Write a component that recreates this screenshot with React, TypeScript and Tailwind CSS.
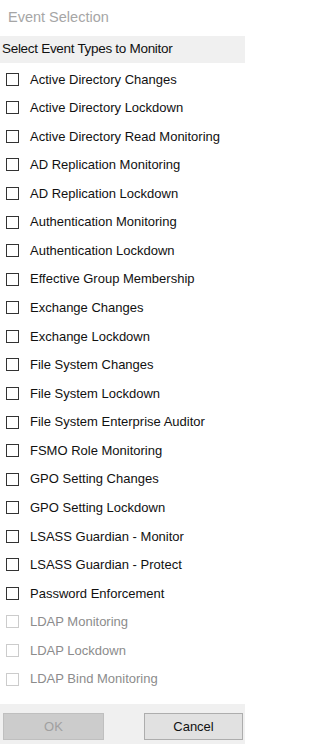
import React from "react"

const events: { label: string; disabled?: boolean }[] = [
  { label: "Active Directory Changes" },
  { label: "Active Directory Lockdown" },
  { label: "Active Directory Read Monitoring" },
  { label: "AD Replication Monitoring" },
  { label: "AD Replication Lockdown" },
  { label: "Authentication Monitoring" },
  { label: "Authentication Lockdown" },
  { label: "Effective Group Membership" },
  { label: "Exchange Changes" },
  { label: "Exchange Lockdown" },
  { label: "File System Changes" },
  { label: "File System Lockdown" },
  { label: "File System Enterprise Auditor" },
  { label: "FSMO Role Monitoring" },
  { label: "GPO Setting Changes" },
  { label: "GPO Setting Lockdown" },
  { label: "LSASS Guardian - Monitor" },
  { label: "LSASS Guardian - Protect" },
  { label: "Password Enforcement" },
  { label: "LDAP Monitoring", disabled: true },
  { label: "LDAP Lockdown", disabled: true },
  { label: "LDAP Bind Monitoring", disabled: true },
]

export default function App() {
  return (
    <div
      className="flex flex-col w-[245px] h-[744px] bg-white overflow-hidden"
      style={{ fontFamily: '"Liberation Sans", Arial, sans-serif' }}
    >
      {/* Title */}
      <div className="h-[36px] flex items-center pl-[8px] text-[14.5px] text-[#a6a6a6]">Event Selection</div>

      {/* Header band */}
      <div className="h-[27px] flex items-center pl-[2px] bg-[#f0f0f0] text-[13.5px] text-[#111] tracking-[-0.3px]">
        Select Event Types to Monitor
      </div>

      {/* Event list */}
      <div className="flex-1 pt-[2px]">
        {events.map((e) => (
          <label key={e.label} className="flex items-center h-[28.57px] pl-[6px]">
            <span
              className={
                e.disabled
                  ? "w-[13px] h-[13px] border border-[#cccccc] bg-white shrink-0"
                  : "w-[13px] h-[13px] border border-[#333333] bg-white shrink-0"
              }
            />
            <span
              className={
                e.disabled
                  ? "ml-[11px] text-[13px] text-[#8c8c8c] whitespace-nowrap"
                  : "ml-[11px] text-[13px] text-[#111] whitespace-nowrap"
              }
            >
              {e.label}
            </span>
          </label>
        ))}
      </div>

      {/* Buttons */}
      <div className="h-[40px] bg-[#f0f0f0] flex items-start pt-[9px] pl-[3px] pr-[2px] justify-between">
        <button
          disabled
          className="w-[101px] h-[27px] bg-[#cccccc] border border-[#bfbfbf] text-[13px] text-[#a0a0a0]"
        >
          OK
        </button>
        <button className="w-[99px] h-[27px] bg-[#e1e1e1] border border-[#adadad] text-[13px] text-[#111]">
          Cancel
        </button>
      </div>
    </div>
  )
}
